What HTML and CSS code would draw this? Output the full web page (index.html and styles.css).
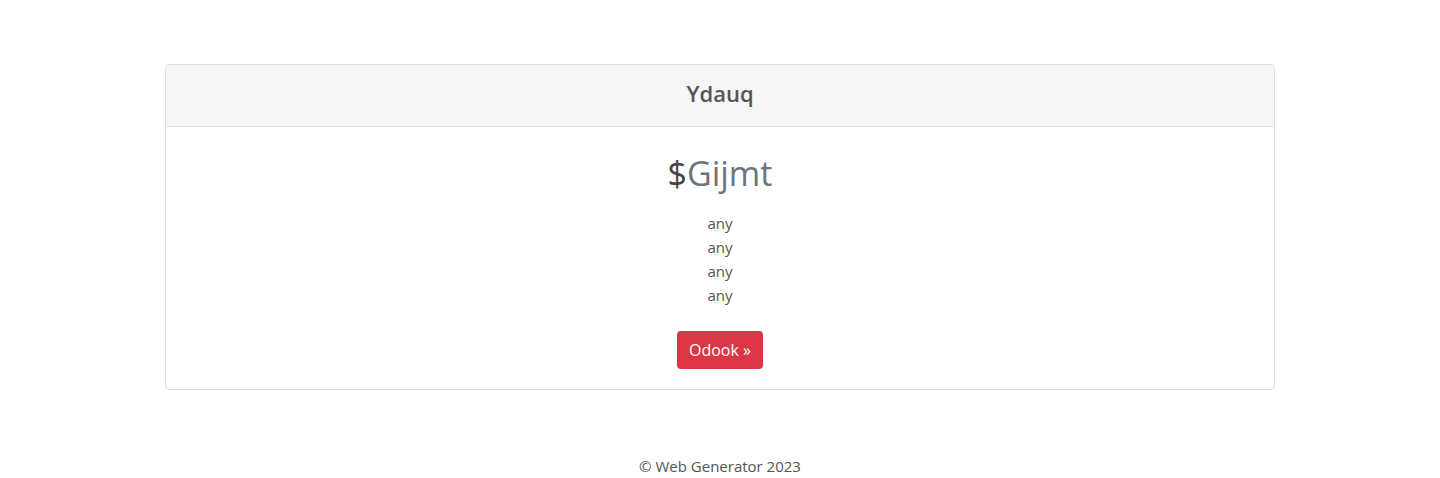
FILE: index.html
```html
<!DOCTYPE html>
<html lang="en">
<head>
<meta charset="utf-8">
<title>Pricing</title>
<link rel="stylesheet" href="styles.css">
</head>
<body>
<main class="container">
  <div class="card">
    <div class="card-header">
      <h4 class="card-heading">Ydauq</h4>
    </div>
    <div class="card-body">
      <h1 class="price"><span class="price-sign">$</span><span class="price-muted">Gijmt</span></h1>
      <ul class="features">
        <li>any</li>
        <li>any</li>
        <li>any</li>
        <li>any</li>
      </ul>
      <a class="btn" href="#">Odook »</a>
    </div>
  </div>
</main>
<footer class="footer">© Web Generator 2023</footer>
</body>
</html>
```
FILE: styles.css
```css
* { box-sizing: border-box; }
html, body { margin: 0; padding: 0; }
body {
  font-family: "Open Sans", "Noto Sans", sans-serif;
  font-size: 15px;
  line-height: 24px;
  color: #555;
  background: #fff;
}
.container {
  width: 1140px;
  margin: 0 auto;
  padding: 64px 15px 0;
}
.card {
  border: 1px solid #dfdfdf;
  border-radius: 4px;
  background: #fff;
  text-align: center;
}
.card-header {
  background: #f6f6f6;
  border-bottom: 1px solid #dfdfdf;
  padding: 14px 20px 18px;
  border-radius: 3px 3px 0 0;
}
.card-heading {
  margin: 0;
  font-size: 22px;
  line-height: 29px;
  font-weight: 600;
  color: #555;
}
.card-body {
  padding: 20px;
}
.price {
  margin: 2px 0 14px;
  font-size: 34px;
  line-height: 48px;
  font-weight: 400;
  color: #555;
}
.price-sign { color: #444; }
.price-muted { color: #6c757d; }
.features {
  list-style: none;
  margin: 0 0 24px;
  padding: 0;
}
.btn {
  display: inline-block;
  background: #dc3545;
  color: #fff;
  text-decoration: none;
  font-size: 16px;
  line-height: 24px;
  padding: 7px 12px;
  border-radius: 4px;
}
.footer {
  text-align: center;
  margin-top: 64px;
  line-height: 24px;
}
```
